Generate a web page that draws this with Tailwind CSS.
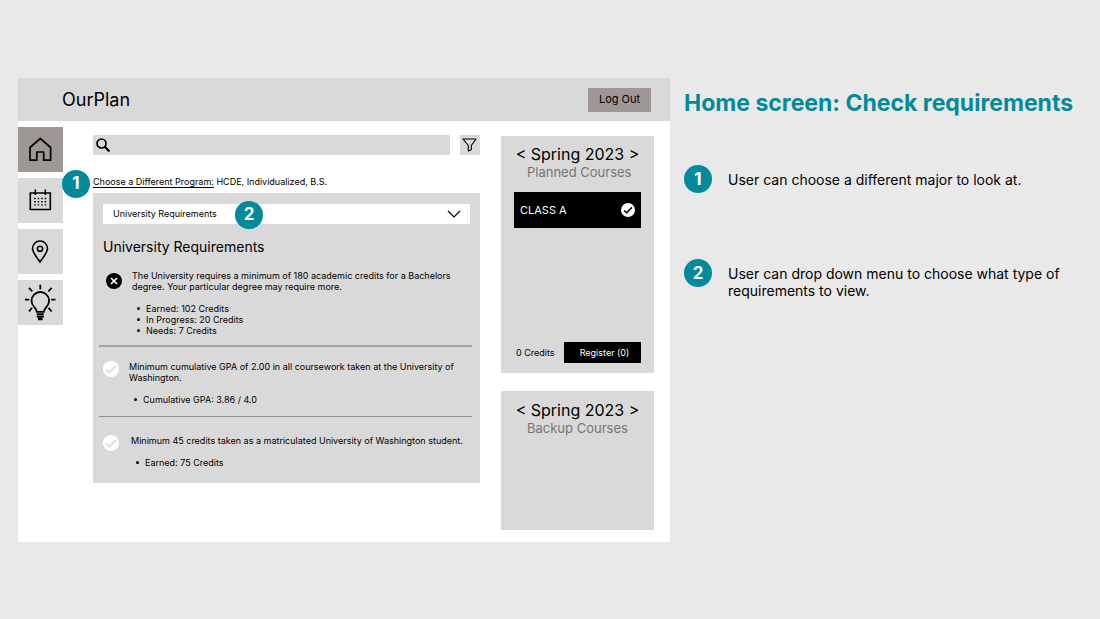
<!DOCTYPE html>
<html lang="en">
<head>
<meta charset="utf-8">
<meta name="viewport" content="width=device-width, initial-scale=1">
<title>OurPlan – Home screen</title>
<script src="https://cdn.jsdelivr.net/npm/@tailwindcss/browser@4"></script>
</head>
<body class="min-h-screen bg-[#e9e9e9] font-['Inter',sans-serif] text-black">
<div class="flex items-start pt-[78px] pb-[77px] pl-[18px]">

  <!-- Application window -->
  <div class="relative min-w-0 flex-1 bg-white">
    <header class="flex h-[43px] items-center justify-between bg-[#d9d9d9] pr-[19px] pl-[44px]">
      <h1 class="text-[18px] leading-6">OurPlan</h1>
      <button type="button" class="h-6 w-[63px] bg-[#9f9696] text-[11px]">Log Out</button>
    </header>

    <div class="flex items-start pb-3">
      <nav aria-label="Main" class="flex w-[45px] shrink-0 flex-col gap-[6px] pt-[6px]">
        <a href="#home" aria-label="Home" class="flex h-[45px] items-center justify-center bg-[#9f9696]">
          <svg class="size-[27px]" viewBox="0 0 27 27" fill="none" stroke="#000" stroke-width="1.7" stroke-linejoin="round"><path d="M13.300 2.500 3 11.500v12.700h6.800V16h6.900v8.200h6.900V11.500z"/></svg>
        </a>
        <a href="#calendar" aria-label="Calendar" class="flex h-[45px] items-center justify-center bg-[#d9d9d9]">
          <svg class="size-[27px]" viewBox="0 0 27 27" fill="none" stroke="#000" stroke-width="1.600"><path d="M3.300 6h20v16.500h-20zM8.300 2.500v5.500M18.300 2.500v5.500"/><path d="M7.200 11.500h12.800M7.200 14.700h12.800M7.200 17.900h12.800" stroke-width="1.400" stroke-dasharray="1.500 2"/></svg>
        </a>
        <a href="#map" aria-label="Map" class="flex h-[45px] items-center justify-center bg-[#d9d9d9]">
          <svg class="size-[27px]" viewBox="0 0 27 27" fill="none" stroke="#000" stroke-width="1.600"><path d="M13 24C9.500 18.500 5.500 14.500 5.500 10.500a7.500 7.500 0 0 1 15 0c0 4-4 8-7.500 13.500z"/><circle cx="13" cy="10.800" r="2.600"/></svg>
        </a>
        <a href="#ideas" aria-label="Ideas" class="flex h-[45px] items-center justify-center bg-[#d9d9d9]">
          <svg class="size-[35px] overflow-visible" viewBox="0 0 35 35" fill="none" stroke="#000" stroke-width="1.800"><path d="M13.800 26.800c-.3-4.300-5.300-5-5.300-11a8.800 8.800 0 0 1 17.600 0c0 6-5 6.700-5.300 11z"/><path d="M13.800 29.200h7M13.800 31.700h7M15 34.100h4.600" stroke-width="2.100"/><path d="M17.300-.3V4.200M6 2.900l3.300 3.600M28.700 2.900l-3.400 3.600M2 14.700h4.300M28.200 14.700H32.500M6 26.500l3-3.600M28.600 26.500l-3-3.600"/></svg>
        </a>
      </nav>

      <main class="min-w-0 flex-1 pt-[14px] pr-[21px] pl-[30px]">
        <form class="flex gap-[10px]" role="search">
          <label class="flex h-5 min-w-0 flex-1 items-center bg-[#d9d9d9] pl-[3px]">
            <svg class="size-[14px] shrink-0" viewBox="0 0 14 14" fill="none" stroke="#000"><circle cx="5.500" cy="5.500" r="4.500" stroke-width="1.700"/><path d="M8.700 8.700 13.500 13.500" stroke-width="2.200"/></svg>
            <input type="search" aria-label="Search" class="h-full min-w-0 flex-1 bg-transparent px-2 text-[10px] outline-none">
          </label>
          <button type="button" aria-label="Filter" class="flex size-5 items-center justify-center bg-[#d9d9d9]">
            <svg class="size-4" viewBox="0 0 16 16" fill="none" stroke="#000" stroke-width="1.100" stroke-linejoin="round"><path d="M1 2h13L9.300 8.500v4.200L6.300 14V8.500z"/></svg>
          </button>
        </form>

        <p class="mt-[21px] text-[9px] leading-3"><a href="#program" class="border-b border-black">Choose a Different Program:</a> HCDE, Individualized, B.S.</p>

        <section class="mt-[5px] bg-[#d9d9d9] pt-[11px] pb-[15px]">
          <div class="relative mx-[10px]">
            <select aria-label="Requirement type" class="block h-5 w-full appearance-none bg-white pl-[10px] text-[9px] outline-none"><option>University Requirements</option></select>
            <svg class="pointer-events-none absolute top-1 right-[9px] h-3 w-[14px]" viewBox="0 0 14 12" fill="none" stroke="#000" stroke-width="1.200"><path d="M1 3l6 6 6-6"/></svg>
            <span class="absolute -top-[3px] left-[132px] flex size-7 items-center justify-center rounded-full bg-[#038a9a] text-[17px] font-bold text-white">2</span>
          </div>
          <h2 class="mt-[13px] pl-[10px] text-[14px] leading-5">University Requirements</h2>
          <ul class="mr-2 ml-[6px] text-[9px] leading-[11px]">
            <li class="flex gap-[10px] pt-[13px] pr-4 pb-[9px] pl-[7px]">
              <svg class="mt-[3px] size-4 shrink-0" viewBox="0 0 16 16"><circle cx="8" cy="8" r="8"/><path d="M5 5l6 6M11 5l-6 6" stroke="#fff" stroke-width="1.700"/></svg>
              <div>
                <p>The University requires a minimum of 180 academic credits for a Bachelors degree. Your particular degree may require more.</p>
                <ul class="mt-[11px] pl-[5px]">
                  <li class="flex items-center gap-[6px] before:size-[3px] before:rounded-full before:bg-black">Earned: 102 Credits</li>
                  <li class="flex items-center gap-[6px] before:size-[3px] before:rounded-full before:bg-black">In Progress: 20 Credits</li>
                  <li class="flex items-center gap-[6px] before:size-[3px] before:rounded-full before:bg-black">Needs: 7 Credits</li>
                </ul>
              </div>
            </li>
            <li class="flex gap-[10px] border-t-2 border-[#a3a3a3] pt-[14px] pr-3 pb-[11px] pl-1">
              <svg class="size-4 shrink-0" viewBox="0 0 16 16"><circle cx="8" cy="8" r="8" fill="#fff"/><path d="M3 8.500l3.200 3L13 4.800" fill="none" stroke="#d9d9d9" stroke-width="1.700"/></svg>
              <div>
                <p>Minimum cumulative GPA of 2.00 in all coursework taken at the University of Washington.</p>
                <ul class="mt-[11px] pl-[5px]"><li class="flex items-center gap-[6px] before:size-[3px] before:rounded-full before:bg-black">Cumulative GPA: 3.86 / 4.0</li></ul>
              </div>
            </li>
            <li class="flex gap-3 border-t border-[#8f8f8f] pt-[18px] pl-1">
              <svg class="size-4 shrink-0" viewBox="0 0 16 16"><circle cx="8" cy="8" r="8" fill="#fff"/><path d="M3 8.500l3.200 3L13 4.800" fill="none" stroke="#d9d9d9" stroke-width="1.700"/></svg>
              <div>
                <p class="whitespace-nowrap">Minimum 45 credits taken as a matriculated University of Washington student.</p>
                <ul class="mt-[11px] pl-[5px]"><li class="flex items-center gap-[6px] before:size-[3px] before:rounded-full before:bg-black">Earned: 75 Credits</li></ul>
              </div>
            </li>
          </ul>
        </section>
      </main>

      <aside class="flex w-[169px] shrink-0 flex-col gap-[18px] pt-[15px] pr-4">
        <section class="flex min-h-[237px] flex-col bg-[#d9d9d9] px-[13px] pt-2 pb-[10px]">
          <h2 class="text-center text-[16px] leading-5 whitespace-nowrap">&lt; Spring 2023 &gt;</h2>
          <p class="pl-[13px] text-[13px] leading-4 text-[#757575]">Planned Courses</p>
          <button type="button" class="mt-3 flex h-9 items-center justify-between bg-black pr-[6px] pl-[6px] text-[11px] text-white">CLASS A
            <svg class="size-[14px]" viewBox="0 0 16 16"><circle cx="8" cy="8" r="8" fill="#fff"/><path d="M3.500 8.500l3 2.700L12.500 5" fill="none" stroke="#000" stroke-width="1.700"/></svg>
          </button>
          <div class="mt-auto flex items-center justify-between text-[9px]">
            <span class="pl-[2px]">0 Credits</span>
            <button type="button" class="h-[21px] w-[77px] bg-black pl-1 text-white">Register (0)</button>
          </div>
        </section>
        <section class="min-h-[139px] bg-[#d9d9d9] px-[13px] pt-[9px]">
          <h2 class="text-center text-[16px] leading-5 whitespace-nowrap">&lt; Spring 2023 &gt;</h2>
          <p class="pl-[13px] text-[13px] leading-4 text-[#757575]">Backup Courses</p>
        </section>
      </aside>
    </div>
    <span class="absolute top-[92px] left-[44px] flex size-7 items-center justify-center rounded-full bg-[#038a9a] text-[17px] font-bold text-white">1</span>
  </div>

  <!-- Annotations -->
  <div class="w-[430px] shrink-0 pt-[10px] pl-[14px]">
    <h2 class="text-[23px] leading-[30px] font-bold whitespace-nowrap text-[#038a9a]">Home screen: Check requirements</h2>
    <ol class="mt-[47px] flex flex-col gap-[66px] pr-8 text-[14px] leading-[17px]">
      <li class="flex gap-4"><span class="flex size-7 shrink-0 items-center justify-center rounded-full bg-[#038a9a] text-[17px] font-bold text-white">1</span><p class="pt-[6px]">User can choose a different major to look at.</p></li>
      <li class="flex gap-4"><span class="flex size-7 shrink-0 items-center justify-center rounded-full bg-[#038a9a] text-[17px] font-bold text-white">2</span><p class="pt-[6px]">User can drop down menu to choose what type of requirements to view.</p></li>
    </ol>
  </div>
</div>
</body>
</html>
